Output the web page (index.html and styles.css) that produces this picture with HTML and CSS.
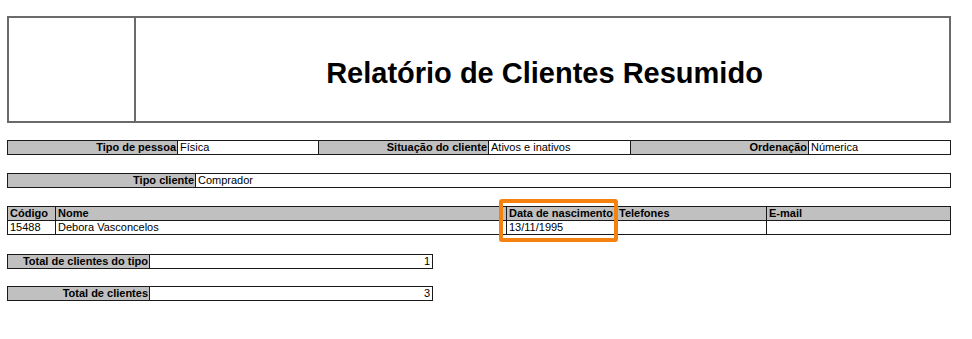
FILE: index.html
```html
<!DOCTYPE html>
<html lang="pt-BR">
<head>
<meta charset="utf-8">
<title>Relatório de Clientes Resumido</title>
<link rel="stylesheet" href="styles.css">
</head>
<body>
<div class="page">
  <div class="header">
    <div class="logo"></div>
    <div class="title">Relatório de Clientes Resumido</div>
  </div>

  <div class="grid filters">
    <div class="lbl">Tipo de pessoa</div>
    <div class="val">Física</div>
    <div class="lbl">Situação do cliente</div>
    <div class="val">Ativos e inativos</div>
    <div class="lbl">Ordenação</div>
    <div class="val">Númerica</div>
  </div>

  <div class="grid tipo">
    <div class="lbl">Tipo cliente</div>
    <div class="val">Comprador</div>
  </div>

  <div class="table-wrap">
    <div class="grid clients">
      <div class="hd">Código</div>
      <div class="hd">Nome</div>
      <div class="hd">Data de nascimento</div>
      <div class="hd">Telefones</div>
      <div class="hd">E-mail</div>
      <div class="val">15488</div>
      <div class="val">Debora Vasconcelos</div>
      <div class="val">13/11/1995</div>
      <div class="val"></div>
      <div class="val"></div>
    </div>
    <div class="highlight"></div>
  </div>

  <div class="grid total">
    <div class="lbl">Total de clientes do tipo</div>
    <div class="val num">1</div>
  </div>

  <div class="grid total">
    <div class="lbl">Total de clientes</div>
    <div class="val num">3</div>
  </div>
</div>
</body>
</html>
```

FILE: styles.css
```css
* { box-sizing: border-box; }

body {
  margin: 0;
  background: #fff;
  font-family: "Liberation Sans", Arial, sans-serif;
  color: #000;
}

.page {
  padding: 16px 0 0 7px;
  width: 951px;
}

.header {
  display: flex;
  height: 107px;
  border: 2px solid #6a6a6a;
}

.logo {
  width: 127px;
  border-right: 2px solid #6a6a6a;
}

.title {
  flex: 1;
  display: flex;
  align-items: center;
  justify-content: center;
  padding-top: 8px;
  padding-left: 4px;
  font-size: 29px;
  font-weight: bold;
}

.grid {
  display: grid;
  gap: 1px;
  padding: 1px;
  background: #1a1a1a;
  font-size: 11px;
  line-height: 13px;
}

.grid > div {
  height: 13px;
  white-space: nowrap;
  overflow: hidden;
}

.lbl {
  background: #c0c0c0;
  font-weight: bold;
  text-align: right;
  padding-right: 1px;
}

.hd {
  background: #c0c0c0;
  font-weight: bold;
  padding-left: 2px;
}

.val {
  background: #fff;
  padding-left: 2px;
}

.num {
  text-align: right;
  padding-right: 2px;
}

.filters {
  margin-top: 17px;
  width: 944px;
  grid-template-columns: 169px 140px 169px 141px 177px 141px;
}

.tipo {
  margin-top: 18px;
  width: 944px;
  grid-template-columns: 187px 1fr;
}

.table-wrap {
  position: relative;
  margin-top: 18px;
  width: 944px;
}

.clients {
  grid-template-columns: 47px 450px 109px 149px 183px;
}

.highlight {
  position: absolute;
  left: 492px;
  top: -7px;
  width: 119px;
  height: 43px;
  border: 4px solid #f5810f;
  border-radius: 3px;
}

.total {
  margin-top: 19px;
  width: 426px;
  grid-template-columns: 141px 1fr;
}

.total + .total {
  margin-top: 17px;
}
```
